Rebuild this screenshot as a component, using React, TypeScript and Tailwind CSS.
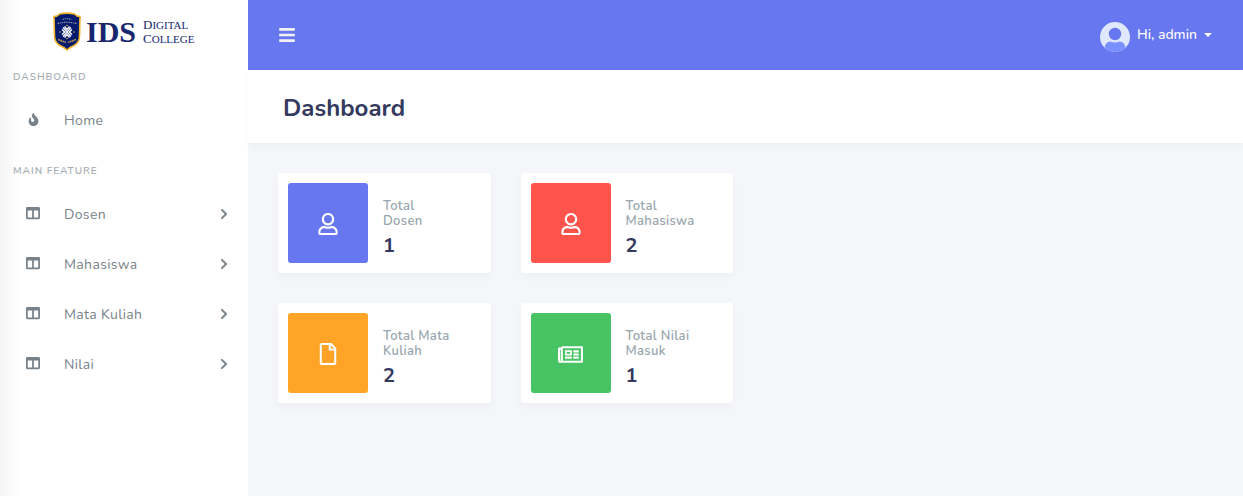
import type { ReactNode } from "react";
import {
  FaBars,
  FaChevronRight,
  FaColumns,
  FaFire,
  FaRegFile,
  FaRegNewspaper,
  FaRegUser,
} from "react-icons/fa";

const features = ["Dosen", "Mahasiswa", "Mata Kuliah", "Nilai"];

const stats: { label: string; value: number; color: string; icon: ReactNode }[] = [
  { label: "Total Dosen", value: 1, color: "bg-[#6777ef]", icon: <FaRegUser size={22} /> },
  { label: "Total Mahasiswa", value: 2, color: "bg-[#ff544b]", icon: <FaRegUser size={22} /> },
  { label: "Total Mata Kuliah", value: 2, color: "bg-[#ffa426]", icon: <FaRegFile size={22} /> },
  { label: "Total Nilai Masuk", value: 1, color: "bg-[#47c363]", icon: <FaRegNewspaper size={25} /> },
];

function Crest() {
  return (
    <svg width="28" height="39" viewBox="0 0 28 39" aria-hidden="true">
      <path
        d="M1 4.5Q4.500 4.500 6.500 2Q14 .2 21.500 2Q23.500 4.500 27 4.500L26.500 24Q26.500 30.500 21 33.500Q16.500 35.500 14 38Q11.500 35.500 7 33.500Q1.500 30.500 1.500 24Z"
        fill="#021a6e"
        stroke="#f0b429"
        strokeWidth="1.6"
      />
      <path d="M9.500 7.500q4.500-1.500 9 0M4.500 11.500q9.500-2.500 19 0" fill="none" stroke="#8d93a4" strokeWidth="1.1" strokeDasharray="1.500 .7" />
      <g fill="none" stroke="#fff" strokeWidth="1.4">
        <path d="M10 15.500l8 9M18 15.500l-8 9" />
        <path d="M11.500 14.500l2.500 3 2.500-3M11.500 25.500l2.500-3 2.500 3M9 17.500l2.700 2.500-2.700 2.500M19 17.500l-2.700 2.500 2.700 2.500" />
      </g>
      <g fill="#f0b429">
        <circle cx="14" cy="13.500" r=".8" />
        <circle cx="14" cy="26.500" r=".8" />
        <circle cx="7" cy="20" r=".8" />
        <circle cx="21" cy="20" r=".8" />
      </g>
      <path d="M5 27.500l8 3M23 27.500l-8 3" stroke="#a98d56" strokeWidth="1.800" strokeDasharray="2 .5" />
    </svg>
  );
}

function Avatar() {
  return (
    <svg width="30" height="30" viewBox="0 0 30 30" aria-hidden="true">
      <clipPath id="avatar-clip">
        <circle cx="15" cy="15" r="15" />
      </clipPath>
      <g clipPath="url(#avatar-clip)">
        <rect width="30" height="30" fill="#dfe8fd" />
        <path d="M4.500 30V26Q5 20 10.500 19.500Q15 21.500 19.500 19.500Q25 20 25.500 26V30Z" fill="#7b90ff" />
        <circle cx="15" cy="12" r="7.300" fill="#dfe8fd" />
        <circle cx="15" cy="12" r="6.200" fill="#6777ef" />
      </g>
    </svg>
  );
}

function MenuHeader({ children }: { children: ReactNode }) {
  return (
    <h2 className="flex h-11 items-center px-[13px] pt-2 text-[10px] font-semibold uppercase tracking-widest text-[#a5adb3]">
      {children}
    </h2>
  );
}

function MenuItem({ icon, label, expandable }: { icon: ReactNode; label: string; expandable?: boolean }) {
  return (
    <li>
      <a
        href="#"
        className="flex h-[50px] items-center pr-[18px] pl-[26px] text-sm tracking-wide text-[#78828a]"
      >
        <span className="flex w-[38px] pb-[2px]">
          <span className="flex w-[14px] justify-center">{icon}</span>
        </span>
        <span className="flex-1 pt-px">{label}</span>
        {expandable && (
          <span className="pb-px">
            <FaChevronRight size={12} />
          </span>
        )}
      </a>
    </li>
  );
}

export default function App() {
  return (
    <div className="flex min-h-screen bg-[#f4f6f9] font-['Nunito',sans-serif]">
      <aside className="w-[248px] shrink-0 bg-white bg-linear-to-r from-[#f4f4f4] to-white to-[20px]">
        <a href="#" className="flex h-[51px] items-end gap-[5px] pl-[53px] text-[#17276f]">
          <Crest />
          <span className="flex h-[39px] items-center gap-[7px] font-['Liberation_Serif',serif]">
            <span className="text-[30px] leading-none font-bold">IDS</span>
            <span className="text-[11px] leading-[13px] uppercase">
              <span className="block first-letter:text-[13px]">Digital</span>
              <span className="block first-letter:text-[13px]">College</span>
            </span>
          </span>
        </a>
        <nav>
          <MenuHeader>Dashboard</MenuHeader>
          <ul>
            <MenuItem icon={<FaFire size={13} />} label="Home" />
          </ul>
          <MenuHeader>Main Feature</MenuHeader>
          <ul>
            {features.map((label) => (
              <MenuItem key={label} icon={<FaColumns size={14} />} label={label} expandable />
            ))}
          </ul>
        </nav>
      </aside>

      <div className="min-w-0 flex-1">
        <header className="flex h-[70px] items-center justify-between bg-[#6777ef] pr-[31px] pl-[30px] text-white">
          <button type="button" aria-label="Toggle sidebar" className="text-[#f2f2f2]">
            <FaBars size={18} />
          </button>
          <button type="button" className="flex items-center gap-[7px] text-sm font-medium">
            <span className="pt-1">
              <Avatar />
            </span>
            <span>Hi, admin</span>
            <span className="border-x-4 border-t-4 border-x-transparent border-t-white" />
          </button>
        </header>

        <main>
          <div className="flex h-[73px] items-center bg-white px-[35px] pt-[3px] shadow-[0_4px_8px_rgba(0,0,0,0.03)]">
            <h1 className="text-2xl font-bold text-[#34395e]">Dashboard</h1>
          </div>
          <div className="grid grid-cols-4 gap-[30px] py-[30px] pr-[25px] pl-[30px]">
            {stats.map((stat, index) => (
              <section
                key={stat.label}
                className={`flex min-h-[100px] gap-[15px] rounded-[3px] bg-white p-[10px] shadow-[0_4px_8px_rgba(0,0,0,0.03)] ${
                  index % 2 === 0 ? "col-start-1" : "col-start-2"
                }`}
              >
                <div
                  className={`flex size-20 shrink-0 items-center justify-center rounded-[3px] pt-[2px] text-white ${stat.color}`}
                >
                  {stat.icon}
                </div>
                <div className="min-w-0 pt-4 pr-6">
                  <h3 className="text-[13px] leading-[15px] font-semibold tracking-wide text-[#98a6ad]">
                    {stat.label}
                  </h3>
                  <p className="pt-[3px] text-xl leading-7 font-bold text-[#34395e]">{stat.value}</p>
                </div>
              </section>
            ))}
          </div>
        </main>
      </div>
    </div>
  );
}
